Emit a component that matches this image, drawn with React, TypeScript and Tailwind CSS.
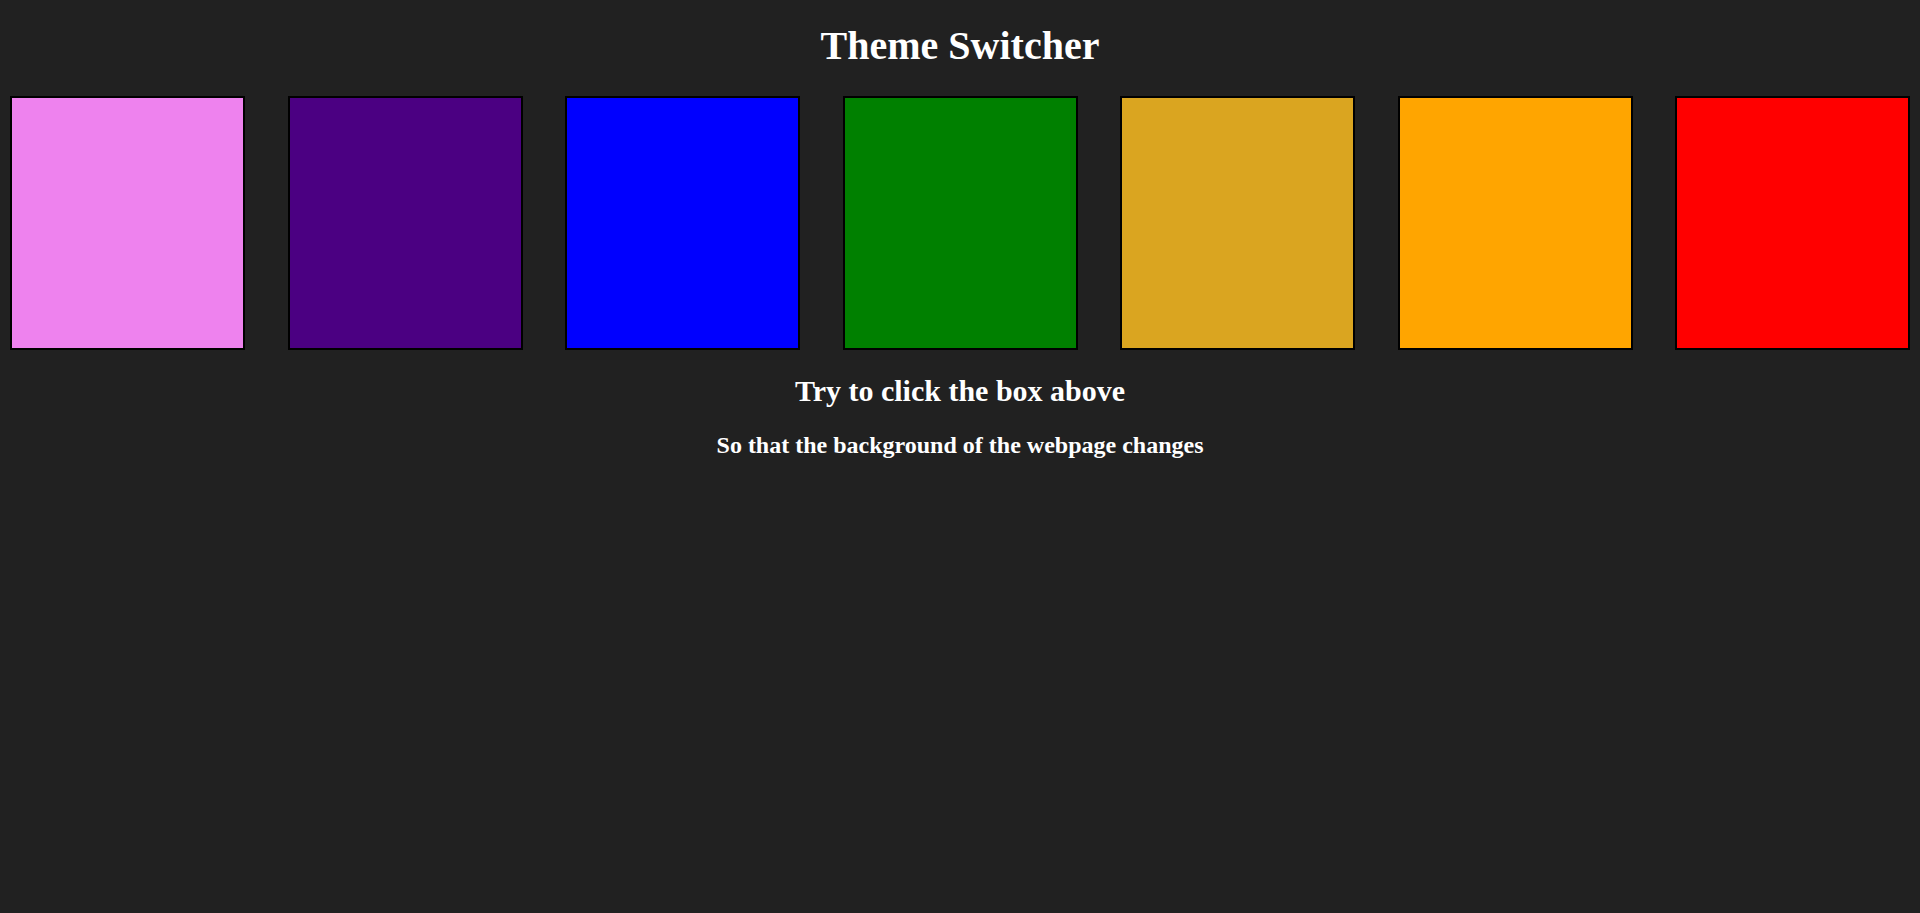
import React from "react";

const colors = ["#ee82ee", "#4b0082", "#0000ff", "#008000", "#daa520", "#ffa500", "#ff0000"];

export default function App() {
  return (
    <div className="min-h-[913px] w-full bg-[#212121] text-white" style={{ fontFamily: '"Liberation Serif", "Times New Roman", serif' }}>
      <h1 className="pt-[26px] text-center text-[40px] font-bold leading-[40px]">Theme Switcher</h1>
      <div className="mt-[30px] flex justify-between px-[10px]">
        {colors.map((c) => (
          <div key={c} className="h-[254px] w-[235px] cursor-pointer border-2 border-black" style={{ backgroundColor: c }} />
        ))}
      </div>
      <h2 className="mt-[26px] text-center text-[30px] font-bold leading-[30px]">Try to click the box above</h2>
      <h3 className="mt-[27px] text-center text-[24px] font-bold leading-[24px]">So that the background of the webpage changes</h3>
    </div>
  );
}
